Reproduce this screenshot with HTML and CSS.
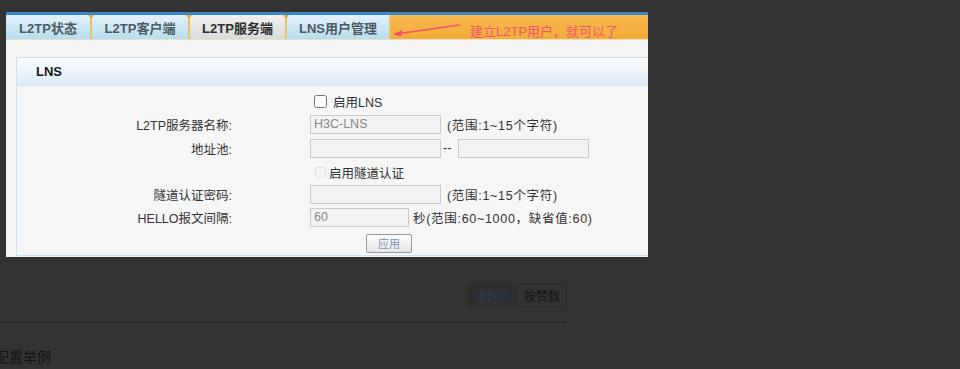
FILE: index.html
```html
<!DOCTYPE html>
<html lang="zh">
<head>
<meta charset="utf-8">
<title>L2TP服务端</title>
<link rel="stylesheet" href="styles.css">
</head>
<body>
<div class="shot">
  <div class="tabs">
    <div class="tab t1">L2TP状态</div>
    <div class="tab t2">L2TP客户端</div>
    <div class="tab t3 active">L2TP服务端</div>
    <div class="tab t4">LNS用户管理</div>
    <div class="note">
      <svg class="arrow" width="72" height="16" viewBox="0 0 72 16">
        <path d="M4 11 L67 2" stroke="#f2526c" stroke-width="1.6" fill="none" stroke-linecap="round"/>
        <path d="M1 11.5 L10 7 L9.5 13.5 Z" fill="#f2526c"/>
      </svg>
      <span class="note-text">建立L2TP用户，就可以了</span>
    </div>
  </div>
  <div class="content">
    <div class="panel">
      <div class="panel-head">LNS</div>
      <div class="panel-body">
        <div class="lbl"></div>
        <div class="ctl"><label class="chk"><input type="checkbox" class="cb"><span>启用LNS</span></label></div>

        <div class="lbl">L2TP服务器名称:</div>
        <div class="ctl"><input type="text" class="field" value="H3C-LNS" readonly><span class="hint">(范围:1~15个字符)</span></div>

        <div class="lbl">地址池:</div>
        <div class="ctl"><input type="text" class="field" value="" readonly><span class="dash">--</span><input type="text" class="field" value="" readonly></div>

        <div class="lbl"></div>
        <div class="ctl"><label class="chk dis"><input type="checkbox" class="cb small" disabled><span>启用隧道认证</span></label></div>

        <div class="lbl">隧道认证密码:</div>
        <div class="ctl"><input type="text" class="field" value="" readonly><span class="hint">(范围:1~15个字符)</span></div>

        <div class="lbl">HELLO报文间隔:</div>
        <div class="ctl"><input type="text" class="field short" value="60" readonly><span class="hint sec">秒(范围:60~1000，缺省值:60)</span></div>

        <div class="lbl"></div>
        <div class="ctl"><button class="apply" type="button">应用</button></div>
      </div>
    </div>
  </div>
</div>

<div class="page">
  <div class="sortbar">
    <div class="seg on">按时间</div>
    <div class="seg">按赞数</div>
  </div>
  <h2 class="title">配置举例</h2>
</div>
</body>
</html>
```

FILE: styles.css
```css
html, body {
  margin: 0;
  padding: 0;
}
body {
  background: #333333;
  font-family: "Liberation Sans", "Noto Sans CJK SC", sans-serif;
  height: 369px;
  overflow: hidden;
}

.shot {
  margin: 12px 0 0 6px;
  width: 642px;
  height: 245px;
  box-sizing: border-box;
  border-top: 3px solid #3b87c6;
  background: #f5f5f5;
  overflow: hidden;
}

.tabs {
  display: flex;
  height: 24px;
  border-bottom: 1px solid #e9e0c8;
}

.tab {
  position: relative;
  display: flex;
  align-items: center;
  justify-content: center;
  font-size: 13px;
  font-weight: bold;
  color: #4f5a63;
  background: linear-gradient(#e3f2fa, #b6ddef);
  box-sizing: border-box;
}
.tab + .tab {
  border-left: 2px solid #f2c06c;
}
.tab + .tab::before {
  content: "";
  position: absolute;
  left: -4px;
  top: 0;
  border-left: 3px solid transparent;
  border-right: 3px solid transparent;
  border-top: 4px solid #eda93a;
}
.t1 { width: 84px; }
.t2 { width: 98px; }
.t3 { width: 97px; }
.t4 { width: 104px; }
.tab.active {
  background: linear-gradient(#f1f1f1, #dadada);
  color: #2e2e2e;
}

.note {
  position: relative;
  flex: 1;
  background: linear-gradient(#f7b84f, #f4ac38);
  border-left: 2px solid #f2c06c;
  box-sizing: border-box;
}
.arrow {
  position: absolute;
  left: 1px;
  top: 8px;
}
.note-text {
  position: absolute;
  left: 79px;
  top: 9px;
  font-size: 13px;
  line-height: 16px;
  color: #f2566e;
  white-space: nowrap;
}

.content {
  padding: 17px 0 0 10px;
}

.panel {
  width: 700px;
  border: 1px solid #cfe1ef;
}
.panel-head {
  height: 27px;
  display: flex;
  align-items: center;
  padding-left: 19px;
  font-size: 13px;
  font-weight: bold;
  color: #1c1c1c;
  background: linear-gradient(#fbfdff, #dcebf8);
  border-bottom: 1px solid #d4e4f1;
}
.panel-body {
  height: 169px;
  box-sizing: border-box;
  padding-top: 4px;
  background: #f6f6f6;
  display: grid;
  grid-template-columns: 215px 1fr;
  column-gap: 78px;
  grid-template-rows: 22px 24px 24px 24px 21px 24px 28px;
  font-size: 12.5px;
  color: #333;
}

.lbl {
  text-align: right;
  align-self: center;
  white-space: nowrap;
}
.ctl {
  display: flex;
  align-items: center;
  white-space: nowrap;
}

.chk {
  display: flex;
  align-items: center;
}
.cb {
  margin: 0 6px 0 4px;
  width: 13px;
  height: 13px;
}
.cb.small {
  margin: 0 3px 0 5px;
  width: 11px;
  height: 11px;
  opacity: 0.5;
}

.field {
  width: 131px;
  height: 19px;
  box-sizing: border-box;
  margin: 0;
  padding: 0 3px;
  border: 1px solid #cacaca;
  background: #f3f3f3;
  color: #8a8a8a;
  font-family: "Liberation Sans", "Noto Sans CJK SC", sans-serif;
  font-size: 12.5px;
  outline: none;
}
.field.short {
  width: 99px;
}
.hint {
  margin-left: 6px;
  letter-spacing: 0.7px;
}
.hint.sec {
  margin-left: 4px;
}
.dash {
  width: 17px;
  padding-left: 2px;
  box-sizing: border-box;
}

.apply {
  margin: 0 0 0 56px;
  width: 46px;
  height: 19px;
  padding: 0;
  border: 1px solid #9a9a9a;
  border-radius: 2px;
  background: linear-gradient(#fdfdfd, #e6e6e6);
  color: #7e93b8;
  font-family: "Liberation Sans", "Noto Sans CJK SC", sans-serif;
  font-size: 11px;
}

.page {
  width: 567px;
}
.sortbar {
  display: flex;
  justify-content: flex-end;
  padding-top: 27px;
  padding-bottom: 15px;
  border-bottom: 1px solid #222222;
}
.seg {
  height: 23px;
  box-sizing: border-box;
  padding: 0 6px;
  display: flex;
  align-items: center;
  font-size: 12px;
  color: #141414;
  border: 1px solid #2b2b2b;
  background: #333333;
}
.seg.on {
  color: #28395a;
  background: #2f2f2f;
  border-right: none;
}
.title {
  margin: 24px 0 0 -5px;
  font-size: 14px;
  line-height: 20px;
  font-weight: normal;
  color: #141414;
}
```
